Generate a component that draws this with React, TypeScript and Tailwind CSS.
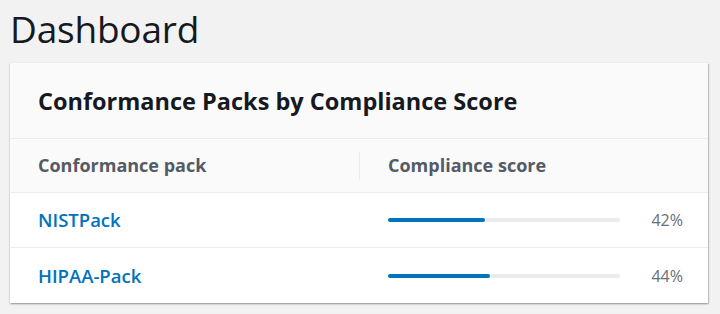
import React from "react"

const PACKS = [
  { name: "NISTPack", score: 42 },
  { name: "HIPAA-Pack", score: 44 },
]

export default function App() {
  return (
    <div
      className="w-[720px] h-[314px] bg-[#f2f2f2] px-[10px] overflow-hidden"
      style={{ fontFamily: '"Open Sans", "Liberation Sans", sans-serif' }}
    >
      <h1 className="h-[63px] pt-[6px] text-[37px] leading-[46px] text-[#16191f] font-normal tracking-[-0.2px]">
        Dashboard
      </h1>

      <div className="w-[698px] bg-white shadow-[0_1px_2px_rgba(0,28,36,0.3),1px_1px_1px_rgba(0,28,36,0.15)]">
        <div className="h-[76px] flex items-center pl-[28px] bg-[#fafafa] border-b border-[#eaeded]">
          <h2 className="text-[23.5px] font-bold text-[#16191f] pt-[2px]">
            Conformance Packs by Compliance Score
          </h2>
        </div>

        <div className="h-[54px] flex items-center bg-[#fafafa] border-b border-[#eaeded] text-[18px] font-bold text-[#545b64]">
          <div className="w-[350px] pl-[28px] flex items-center justify-between">
            <span>Conformance pack</span>
            <span className="w-px h-[28px] bg-[#eaeded]" />
          </div>
          <div className="pl-[28px]">Compliance score</div>
        </div>

        {PACKS.map((p, i) => (
          <div
            key={p.name}
            className={`h-[55px] flex items-center ${i === 0 ? "border-b border-[#eaeded]" : ""}`}
          >
            <div className="w-[350px] pl-[28px]">
              <a className="text-[18.5px] font-semibold text-[#0073bb]">{p.name}</a>
            </div>
            <div className="flex items-center pl-[28px]">
              <div className="w-[232px] h-[4px] rounded-full bg-[#eaeded]">
                <div className="h-full rounded-full bg-[#0073bb]" style={{ width: `${p.score}%` }} />
              </div>
              <span className="w-[63px] text-right text-[16px] text-[#687078]">{p.score}%</span>
            </div>
          </div>
        ))}
      </div>
    </div>
  )
}
